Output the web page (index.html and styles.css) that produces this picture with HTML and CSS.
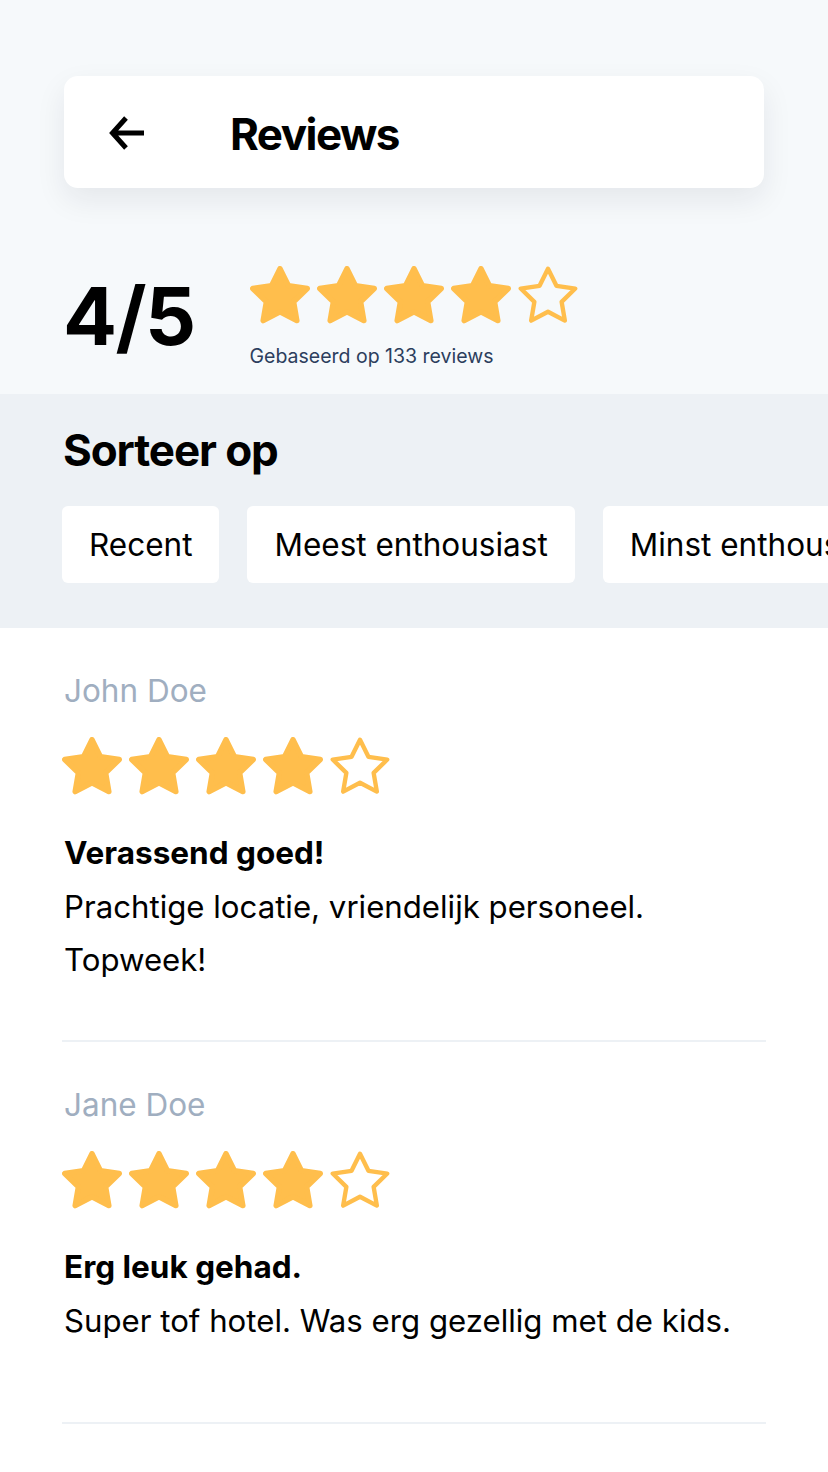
FILE: index.html
```html
<!DOCTYPE html>
<html lang="nl">
<head>
<meta charset="utf-8">
<title>Reviews</title>
<link rel="stylesheet" href="styles.css">
</head>
<body>
<svg width="0" height="0" class="defs" aria-hidden="true">
  <defs>
    <path id="star" d="M12 2 15.09 8.26 22 9.27 17 14.14 18.18 21.02 12 17.77 5.82 21.02 7 14.14 2 9.27 8.91 8.26Z"/>
  </defs>
</svg>
<div class="page">
  <section class="top">
    <header class="topbar">
      <svg class="back" viewBox="0 0 40 40" aria-hidden="true"><path d="M37 20H6M19 5 5.5 20 19 35" fill="none" stroke="#000" stroke-width="5"/></svg>
      <h1 class="title">Reviews</h1>
    </header>
    <div class="summary">
      <div class="score">4/5</div>
      <div class="summary-right">
        <div class="stars">
          <svg class="star full" viewBox="1 1 22 22"><use href="#star"/></svg>
          <svg class="star full" viewBox="1 1 22 22"><use href="#star"/></svg>
          <svg class="star full" viewBox="1 1 22 22"><use href="#star"/></svg>
          <svg class="star full" viewBox="1 1 22 22"><use href="#star"/></svg>
          <svg class="star empty" viewBox="1 1 22 22"><use href="#star"/></svg>
        </div>
        <p class="based">Gebaseerd op 133 reviews</p>
      </div>
    </div>
  </section>

  <section class="sort">
    <h2 class="sort-title">Sorteer op</h2>
    <div class="sort-options">
      <button class="chip">Recent</button>
      <button class="chip">Meest enthousiast</button>
      <button class="chip">Minst enthousiast</button>
    </div>
  </section>

  <section class="reviews">
    <article class="review">
      <div class="name">John Doe</div>
      <div class="stars">
        <svg class="star full" viewBox="1 1 22 22"><use href="#star"/></svg>
        <svg class="star full" viewBox="1 1 22 22"><use href="#star"/></svg>
        <svg class="star full" viewBox="1 1 22 22"><use href="#star"/></svg>
        <svg class="star full" viewBox="1 1 22 22"><use href="#star"/></svg>
        <svg class="star empty" viewBox="1 1 22 22"><use href="#star"/></svg>
      </div>
      <h3 class="review-title">Verassend goed!</h3>
      <p class="review-body">Prachtige locatie, vriendelijk personeel.<br>Topweek!</p>
    </article>
    <article class="review">
      <div class="name">Jane Doe</div>
      <div class="stars">
        <svg class="star full" viewBox="1 1 22 22"><use href="#star"/></svg>
        <svg class="star full" viewBox="1 1 22 22"><use href="#star"/></svg>
        <svg class="star full" viewBox="1 1 22 22"><use href="#star"/></svg>
        <svg class="star full" viewBox="1 1 22 22"><use href="#star"/></svg>
        <svg class="star empty" viewBox="1 1 22 22"><use href="#star"/></svg>
      </div>
      <h3 class="review-title">Erg leuk gehad.</h3>
      <p class="review-body">Super tof hotel. Was erg gezellig met de kids.</p>
    </article>
  </section>
</div>
</body>
</html>
```
FILE: styles.css
```css
* { box-sizing: border-box; }

html, body {
  margin: 0;
  padding: 0;
  background: #ffffff;
  font-family: Inter, "Noto Sans", "Liberation Sans", sans-serif;
  color: #000;
}

.defs { position: absolute; width: 0; height: 0; overflow: hidden; }

.page { width: 828px; min-height: 1472px; overflow: hidden; }

/* top */
.top {
  background: #f6f9fb;
  padding: 76px 64px 27px;
}

.topbar {
  height: 112px;
  background: #fff;
  border-radius: 14px;
  box-shadow: 0 12px 30px rgba(20, 30, 50, 0.08);
  display: flex;
  align-items: center;
  padding-left: 43px;
  gap: 83px;
}

.back { width: 40px; height: 40px; flex: none; margin-top: 2px; }

.title {
  margin: 4px 0 0;
  font-size: 44px;
  font-weight: 700;
  letter-spacing: -0.035em;
  line-height: 1.2;
}

.summary {
  display: flex;
  align-items: flex-start;
  gap: 55px;
  padding-top: 78px;
}

.score {
  font-size: 80px;
  font-weight: 700;
  letter-spacing: -0.02em;
  line-height: 80px;
  margin-top: 10px;
  margin-left: -1px;
}

.stars {
  display: flex;
  gap: 7px;
  height: 60px;
}

.star { width: 60px; height: 60px; flex: none; }
.star.full { fill: #ffbe4c; stroke: #ffbe4c; stroke-width: 2; stroke-linejoin: round; }
.star.empty { fill: none; stroke: #ffbe4c; stroke-width: 1.6; stroke-linejoin: round; }

.based {
  margin: 19px 0 0;
  font-size: 19.5px;
  line-height: 22px;
  color: #2c3e5d;
}

/* sort */
.sort {
  background: #edf1f5;
  padding: 30px 0 45px 62px;
  overflow: hidden;
}

.sort-title {
  margin: 0 0 29px;
  padding-left: 1px;
  font-size: 44px;
  font-weight: 700;
  letter-spacing: -0.025em;
  line-height: 1.2;
}

.sort-options {
  display: flex;
  gap: 28px;
  white-space: nowrap;
}

.chip {
  flex: none;
  height: 77px;
  padding: 0 27px;
  border: 0;
  border-radius: 6px;
  background: #fff;
  font-family: inherit;
  font-size: 31.5px;
  color: #000;
}

/* reviews */
.reviews { margin: 0 62px; }

.review {
  padding: 44px 0 53px;
  border-bottom: 2px solid #edf1f5;
}

.review:last-child { padding-bottom: 74px; }

.name {
  font-size: 31.5px;
  line-height: 37px;
  color: #a0aec0;
  padding-left: 2px;
}

.review .stars { margin-top: 28px; }

.review-title {
  margin: 38px 0 0;
  padding-left: 2px;
  font-size: 31.5px;
  line-height: 36px;
  font-weight: 700;
}

.review-body {
  margin: 10px 0 0;
  padding-left: 2px;
  font-size: 31.2px;
  line-height: 53px;
}
```
